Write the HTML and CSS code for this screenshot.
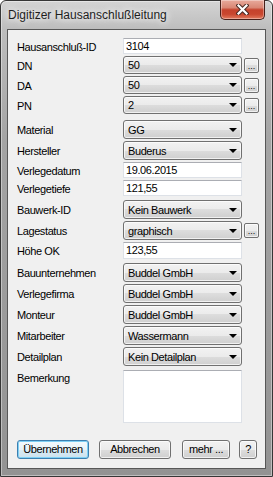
FILE: index.html
```html
<!DOCTYPE html>
<html lang="de">
<head>
    <meta charset="UTF-8">
    <meta name="viewport" content="width=device-width, initial-scale=1.0">
    <title>Digitizer Hausanschlußleitung</title>
    <link rel="stylesheet" href="styles.css">
</head>
<body>

<div class="window">
    <!-- Titelleiste -->
    <div class="titlebar">
        <span class="title">Digitizer Hausanschlußleitung</span>
        <div class="close-btn">
            <svg width="13" height="11" viewBox="0 0 13 11">
                <path d="M2.5 1.5 L10.5 9.5 M10.5 1.5 L2.5 9.5" stroke="#4a2a24" stroke-width="4.2" stroke-linecap="square"/>
                <path d="M2.5 1.5 L10.5 9.5 M10.5 1.5 L2.5 9.5" stroke="#ffffff" stroke-width="2.2" stroke-linecap="square"/>
            </svg>
        </div>
    </div>

    <div class="client">
        <div class="form">
            <div class="row">
                <label>Hausanschluß-ID</label>
                <div class="edit">3104</div>
            </div>
            <div class="row">
                <label>DN</label>
                <div class="combo small">50</div>
                <div class="more">...</div>
            </div>
            <div class="row">
                <label>DA</label>
                <div class="combo small">50</div>
                <div class="more">...</div>
            </div>
            <div class="row">
                <label>PN</label>
                <div class="combo small">2</div>
                <div class="more">...</div>
            </div>
            <div class="row wide-gap">
                <label>Material</label>
                <div class="combo medium">GG</div>
            </div>
            <div class="row">
                <label>Hersteller</label>
                <div class="combo medium">Buderus</div>
            </div>
            <div class="row">
                <label>Verlegedatum</label>
                <div class="edit">19.06.2015</div>
            </div>
            <div class="row">
                <label>Verlegetiefe</label>
                <div class="edit">121,55</div>
            </div>
            <div class="row spaced">
                <label>Bauwerk-ID</label>
                <div class="combo">Kein Bauwerk</div>
            </div>
            <div class="row">
                <label>Lagestatus</label>
                <div class="combo">graphisch</div>
                <div class="more">...</div>
            </div>
            <div class="row">
                <label>Höhe OK</label>
                <div class="edit tall">123,55</div>
            </div>
            <div class="row spaced">
                <label>Bauunternehmen</label>
                <div class="combo">Buddel GmbH</div>
            </div>
            <div class="row">
                <label>Verlegefirma</label>
                <div class="combo">Buddel GmbH</div>
            </div>
            <div class="row">
                <label>Monteur</label>
                <div class="combo">Buddel GmbH</div>
            </div>
            <div class="row">
                <label>Mitarbeiter</label>
                <div class="combo">Wassermann</div>
            </div>
            <div class="row">
                <label>Detailplan</label>
                <div class="combo">Kein Detailplan</div>
            </div>
            <div class="row spaced memo-row">
                <label>Bemerkung</label>
                <div class="memo"></div>
            </div>
        </div>

        <!-- Schaltflächen -->
        <div class="buttons">
            <div class="btn default-btn">Übernehmen</div>
            <div class="btn cancel-btn">Abbrechen</div>
            <div class="btn more-btn">mehr ...</div>
            <div class="btn help-btn">?</div>
        </div>
    </div>
</div>

</body>
</html>
```

FILE: styles.css
```css
body {
    margin: 0;
    font-family: "Liberation Sans", Arial, sans-serif;
    font-size: 11px;
    letter-spacing: -0.4px;
    color: #000;
}
.window {
    box-sizing: border-box;
    width: 273px;
    height: 477px;
    display: flex;
    flex-direction: column;
    padding: 0 6px 7px 6px;
    border: 1px solid #363636;
    border-radius: 6px 6px 0 0;
    background: linear-gradient(to bottom, #d4d4d4, #bdbdbd 28px, #a4a4a4 140px, #939393);
    box-shadow: inset 0 0 0 1px rgba(255, 255, 255, 0.4);
}
.titlebar {
    height: 28px;
    flex-shrink: 0;
    display: flex;
    justify-content: space-between;
    align-items: flex-start;
}
.title {
    margin: 7px 0 0 1px;
    font-size: 12px;
    line-height: 14px;
    letter-spacing: 0;
    color: #1e1e1e;
    text-shadow: 0 0 6px #fff, 0 0 10px rgba(255, 255, 255, 0.9);
}
.close-btn {
    box-sizing: border-box;
    width: 45px;
    height: 20px;
    margin: -1px 1px 0 0;
    display: flex;
    align-items: center;
    justify-content: center;
    border: 1px solid #47201a;
    border-top: none;
    border-radius: 0 0 5px 5px;
    background: linear-gradient(to bottom, #e8aa9c, #d98775 40%, #c5422c 52%, #c9472f 75%, #e27a5e);
    box-shadow: inset 0 0 0 1px rgba(255, 255, 255, 0.35);
}
.client {
    flex: 1;
    display: flex;
    flex-direction: column;
    padding: 8px 7px 9px 9px;
    border: 1px solid #575757;
    background-color: #f0f0f0;
}
.form {
    display: flex;
    flex-direction: column;
    gap: 2px;
}
.row {
    display: grid;
    grid-template-columns: 104px 119px 15px;
    column-gap: 2px;
    align-items: center;
}
.row.spaced {
    margin-top: 2px;
}
.row.wide-gap {
    margin-top: 4px;
}
.row label {
    padding-top: 2px;
    line-height: 13px;
    white-space: nowrap;
}
.edit {
    box-sizing: border-box;
    height: 16px;
    padding-left: 2px;
    line-height: 14px;
    background-color: #fff;
    border: 1px solid #dde1e7;
    border-top-color: #abadb3;
}
.edit.tall {
    height: 17px;
    line-height: 15px;
}
.combo {
    box-sizing: border-box;
    height: 19px;
    padding: 0 4px 0 4px;
    display: flex;
    align-items: center;
    justify-content: space-between;
    border: 1px solid #707070;
    border-radius: 3px;
    background: linear-gradient(to bottom, #f2f2f2, #ebebeb 50%, #dddddd 50%, #cfcfcf);
    box-shadow: inset 0 0 0 1px rgba(255, 255, 255, 0.7);
}
.combo.small {
    height: 18px;
}
.combo.medium {
    height: 19px;
}
.combo::after {
    content: "";
    border-left: 4px solid transparent;
    border-right: 4px solid transparent;
    border-top: 4px solid #000;
}
.more {
    box-sizing: border-box;
    width: 15px;
    height: 15px;
    display: flex;
    align-items: flex-end;
    justify-content: center;
    font-size: 9px;
    line-height: 11px;
    letter-spacing: 0;
    border: 1px solid #707070;
    border-radius: 2px;
    background: linear-gradient(to bottom, #f2f2f2, #ebebeb 50%, #dddddd 50%, #cfcfcf);
    box-shadow: inset 0 0 0 1px rgba(255, 255, 255, 0.7);
}
.memo-row {
    align-items: start;
}
.memo {
    box-sizing: border-box;
    height: 53px;
    background-color: #fff;
    border: 1px solid #dde1e7;
    border-top-color: #abadb3;
}
.buttons {
    margin-top: auto;
    display: flex;
}
.btn {
    box-sizing: border-box;
    height: 19px;
    line-height: 17px;
    text-align: center;
    border: 1px solid #707070;
    border-radius: 3px;
    background: linear-gradient(to bottom, #f2f2f2, #ebebeb 50%, #dddddd 50%, #cfcfcf);
    box-shadow: inset 0 0 0 1px rgba(255, 255, 255, 0.7);
}
.default-btn {
    width: 72px;
    border-color: #3c7fb1;
    box-shadow: inset 0 0 0 1px #7fd0f4;
    background: linear-gradient(to bottom, #f4fafd, #e8f3f9 50%, #d9eaf4 50%, #cde2ee);
}
.cancel-btn {
    width: 72px;
    margin-left: 10px;
}
.more-btn {
    width: 48px;
    margin-left: 11px;
}
.help-btn {
    width: 18px;
    margin-left: 9px;
}
```
